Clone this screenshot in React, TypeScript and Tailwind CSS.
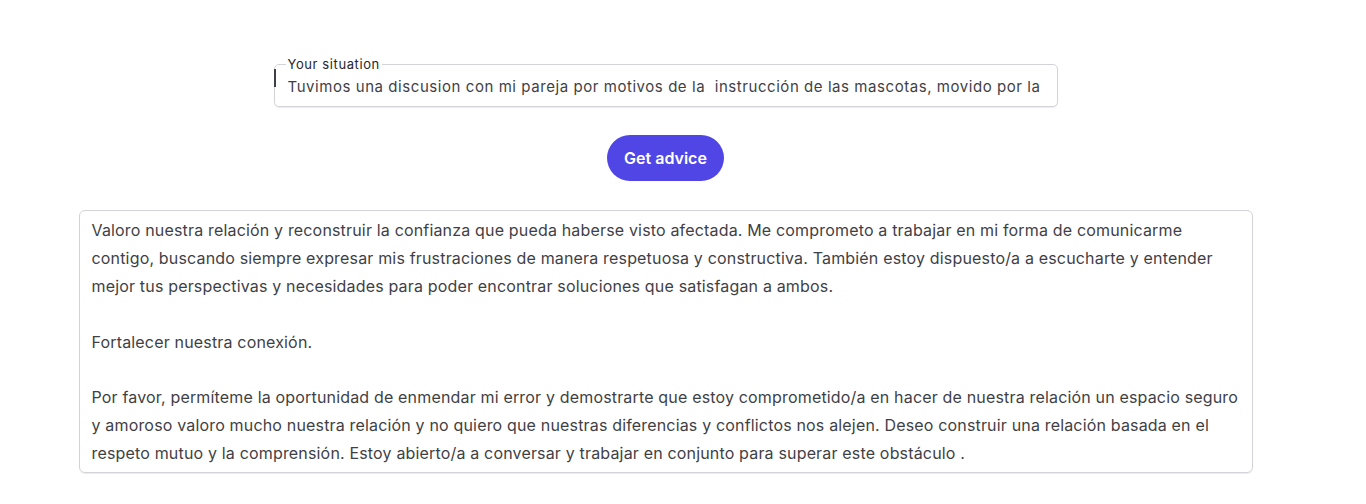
export default function App() {
  return (
    <main className="min-h-[504px] bg-white font-['Inter',sans-serif] text-[#3f3f46]">
      <div className="w-[1331px] flex flex-col items-center pt-[57px]">
        <fieldset className="relative w-[784px] h-[50px] border border-[#d4d4d8] rounded-[5px] px-[13px] shadow-[0_1px_1px_rgba(0,0,0,0.08)]">
          <legend className="ml-[-2px] px-[2px] text-[13px] leading-[14px] tracking-[0.6px] text-[#27272a]">Your situation</legend>
          <span className="absolute left-[-1px] top-[-2px] w-[2px] h-[18px] bg-[#3f3f46]" />
          <div className="text-[15px] leading-[20px] tracking-[0.56px] text-[#3f3f46] whitespace-pre pt-[6px]">
            Tuvimos una discusion con mi pareja por motivos de la  instrucción de las mascotas, movido por la
          </div>
        </fieldset>

        <button className="mt-[28px] h-[46px] px-[17px] rounded-full bg-[#4f46e5] text-white text-[16px] font-semibold">
          Get advice
        </button>

        <div className="mt-[29px] w-[1174px] border border-[#d4d4d8] rounded-[6px] px-[12px] pt-[6px] pb-[4px] text-[16px] leading-[27.9px] tracking-[0.17px] shadow-[0_1px_1px_rgba(0,0,0,0.08)]">
          <p>
            Valoro nuestra relación y reconstruir la confianza que pueda haberse visto afectada. Me comprometo a trabajar en mi forma de comunicarme contigo, buscando siempre expresar mis frustraciones de manera respetuosa y constructiva. También estoy dispuesto/a a escucharte y entender mejor tus perspectivas y necesidades para poder encontrar soluciones que satisfagan a ambos.
          </p>
          <p className="mt-[27.9px]">Fortalecer nuestra conexión.</p>
          <p className="mt-[27.9px]">
            Por favor, permíteme la oportunidad de enmendar mi error y demostrarte que estoy comprometido/a en hacer de nuestra relación un espacio seguro y amoroso valoro mucho nuestra relación y no quiero que nuestras diferencias y conflictos nos alejen. Deseo construir una relación basada en el respeto mutuo y la comprensión. Estoy abierto/a a conversar y trabajar en conjunto para superar este obstáculo .
          </p>
        </div>
      </div>
    </main>
  );
}
